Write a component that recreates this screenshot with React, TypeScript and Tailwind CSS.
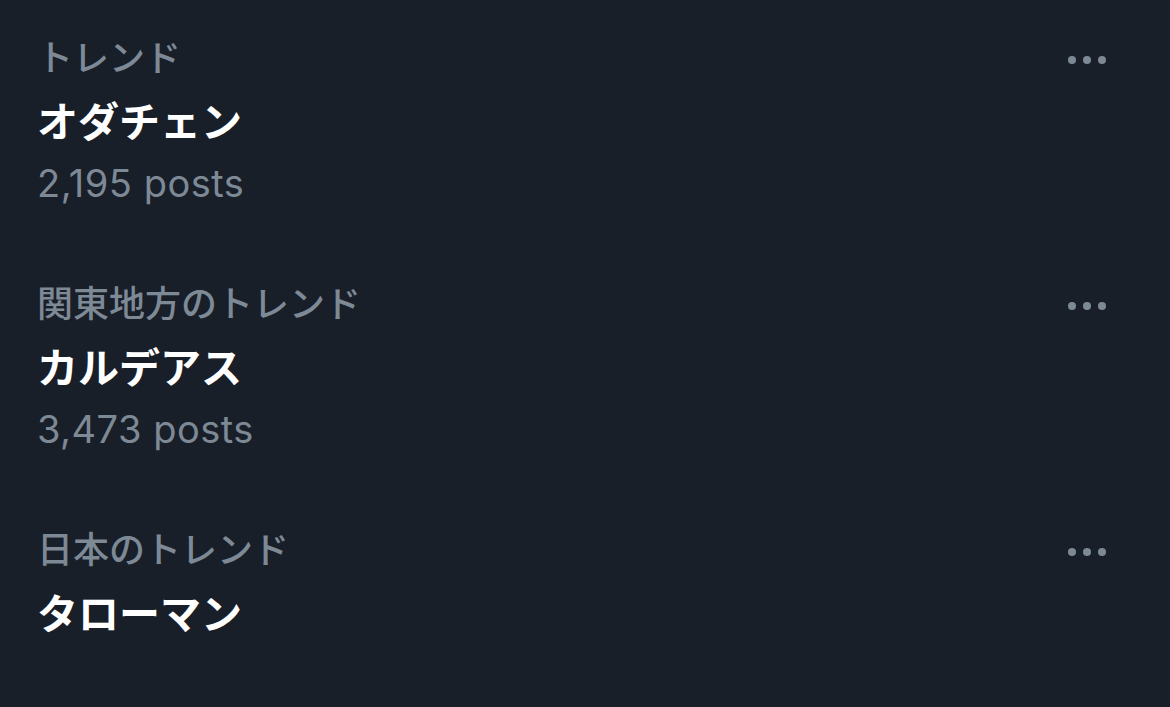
import React from "react";

const items = [
  { label: "トレンド", title: "オダチェン", posts: "2,195 posts" },
  { label: "関東地方のトレンド", title: "カルデアス", posts: "3,473 posts" },
  { label: "日本のトレンド", title: "タローマン", posts: null },
];

function Dots() {
  return (
    <div className="flex items-center gap-[7px] pt-[4px]">
      <span className="w-[8px] h-[8px] rounded-full bg-[#7e8996]" />
      <span className="w-[8px] h-[8px] rounded-full bg-[#7e8996]" />
      <span className="w-[8px] h-[8px] rounded-full bg-[#7e8996]" />
    </div>
  );
}

export default function App() {
  return (
    <div
      className="w-[1170px] h-[707px] bg-[#181f29] overflow-hidden pt-[36px] pl-[37px] pr-[64px]"
      style={{ fontFamily: 'Inter, "Noto Sans CJK JP", sans-serif' }}
    >
      {items.map((it, i) => (
        <div key={i} className="h-[246px]">
          <div className="flex justify-between items-center h-[44px]">
            <div className="text-[36px] leading-[44px] font-medium text-[#7e8996]">
              {it.label}
            </div>
            <Dots />
          </div>
          <div className="mt-[10px] h-[64px] text-[41px] leading-[64px] font-bold text-white">
            {it.title}
          </div>
          {it.posts && (
            <div className="mt-[5px] h-[48px] text-[38px] leading-[48px] tracking-[0.5px] text-[#7e8996]">
              {it.posts}
            </div>
          )}
        </div>
      ))}
    </div>
  );
}
